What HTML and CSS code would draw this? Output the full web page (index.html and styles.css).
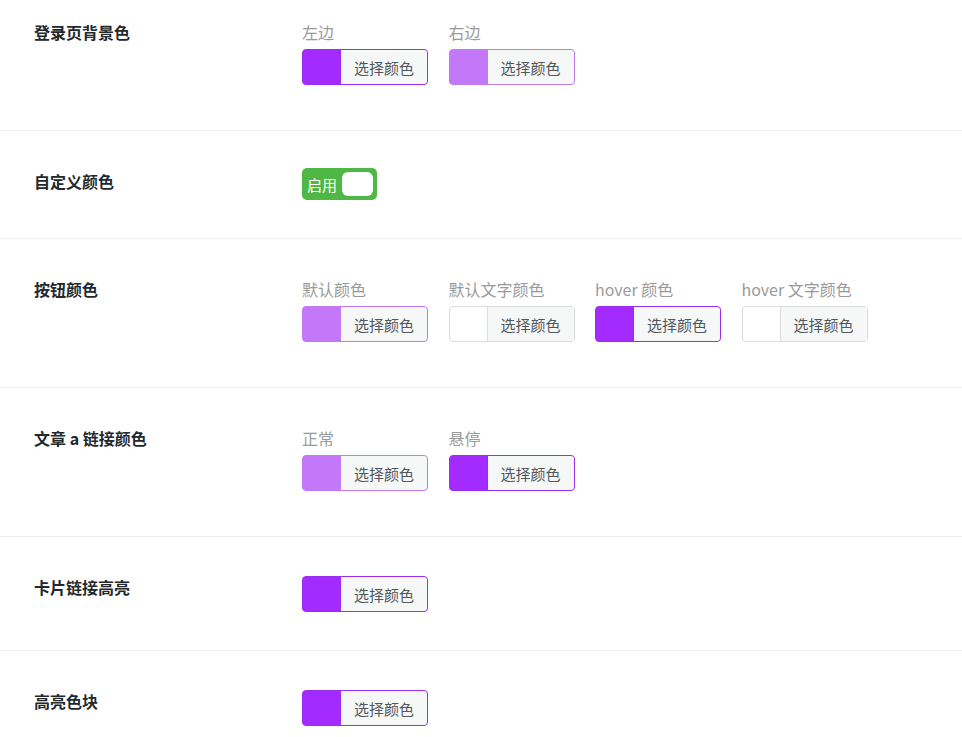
FILE: index.html
```html
<!DOCTYPE html>
<html lang="zh-CN">
<head>
    <meta charset="UTF-8">
    <meta name="viewport" content="width=device-width, initial-scale=1.0">
    <title>颜色设置</title>
    <link rel="stylesheet" href="styles.css">
</head>
<body>
    <div class="options">
        <div class="field">
            <div class="field-title">登录页背景色</div>
            <div class="field-body">
                <div class="color-group">
                    <div class="sub-title">左边</div>
                    <button class="color-result deep" type="button"><span class="color-text">选择颜色</span></button>
                </div>
                <div class="color-group">
                    <div class="sub-title">右边</div>
                    <button class="color-result light" type="button"><span class="color-text">选择颜色</span></button>
                </div>
            </div>
        </div>

        <div class="field">
            <div class="field-title">自定义颜色</div>
            <div class="field-body">
                <label class="switcher">
                    <span class="switcher-text">启用</span>
                    <span class="switcher-knob"></span>
                </label>
            </div>
        </div>

        <div class="field">
            <div class="field-title">按钮颜色</div>
            <div class="field-body">
                <div class="color-group">
                    <div class="sub-title">默认颜色</div>
                    <button class="color-result light" type="button"><span class="color-text">选择颜色</span></button>
                </div>
                <div class="color-group">
                    <div class="sub-title">默认文字颜色</div>
                    <button class="color-result blank" type="button"><span class="color-text">选择颜色</span></button>
                </div>
                <div class="color-group">
                    <div class="sub-title">hover 颜色</div>
                    <button class="color-result deep" type="button"><span class="color-text">选择颜色</span></button>
                </div>
                <div class="color-group">
                    <div class="sub-title">hover 文字颜色</div>
                    <button class="color-result blank" type="button"><span class="color-text">选择颜色</span></button>
                </div>
            </div>
        </div>

        <div class="field">
            <div class="field-title">文章 a 链接颜色</div>
            <div class="field-body">
                <div class="color-group">
                    <div class="sub-title">正常</div>
                    <button class="color-result light" type="button"><span class="color-text">选择颜色</span></button>
                </div>
                <div class="color-group">
                    <div class="sub-title">悬停</div>
                    <button class="color-result deep" type="button"><span class="color-text">选择颜色</span></button>
                </div>
            </div>
        </div>

        <div class="field">
            <div class="field-title">卡片链接高亮</div>
            <div class="field-body">
                <button class="color-result deep" type="button"><span class="color-text">选择颜色</span></button>
            </div>
        </div>

        <div class="field">
            <div class="field-title">高亮色块</div>
            <div class="field-body">
                <button class="color-result deep" type="button"><span class="color-text">选择颜色</span></button>
            </div>
        </div>
    </div>
</body>
</html>
```

FILE: styles.css
```css
body {
    margin: 0;
    background-color: #fff;
    font-family: "Noto Sans CJK SC", "Noto Sans", sans-serif;
    color: #23282d;
}
.options {
    width: 962px;
}
.field {
    display: flex;
    padding: 39px 0 38px 34px;
    border-bottom: 1px solid #eeeeee;
}
.field:first-child {
    padding-top: 21px;
}
.field-title {
    width: 268px;
    flex-shrink: 0;
    font-size: 16px;
    line-height: 22px;
    font-weight: bold;
    color: #23282d;
}
.field-body {
    display: flex;
    gap: 20.5px;
}
.color-group {
    width: 126px;
    margin-bottom: 7px;
}
.sub-title {
    font-size: 16px;
    line-height: 22px;
    color: #9a9a9a;
    margin-bottom: 6px;
    white-space: nowrap;
}
.color-result {
    --c: #ffffff;
    --b: #dcdcde;
    display: block;
    width: 126px;
    height: 36px;
    margin: 0;
    padding: 0 0 0 37px;
    border: 1px solid var(--b);
    border-radius: 4px;
    background-color: var(--c);
    cursor: pointer;
    font-family: inherit;
}
.color-result.deep {
    --c: #a32bff;
    --b: #9a2ef0;
}
.color-result.light {
    --c: #c377f9;
    --b: #c27af2;
}
.color-text {
    display: flex;
    align-items: center;
    justify-content: center;
    height: 100%;
    border-left: 1px solid var(--b);
    border-radius: 0 3px 3px 0;
    background-color: #f6f7f7;
    font-size: 15px;
    color: #50575e;
}
.switcher {
    display: flex;
    align-items: center;
    width: 75px;
    height: 32px;
    margin-top: -2px;
    padding: 0 4px 0 5px;
    box-sizing: border-box;
    border-radius: 5px;
    background-color: #4fb845;
    cursor: pointer;
}
.switcher-text {
    font-size: 15px;
    color: #fff;
    flex: 1;
}
.switcher-knob {
    width: 31px;
    height: 24px;
    border-radius: 6px;
    background-color: #fff;
}
```
